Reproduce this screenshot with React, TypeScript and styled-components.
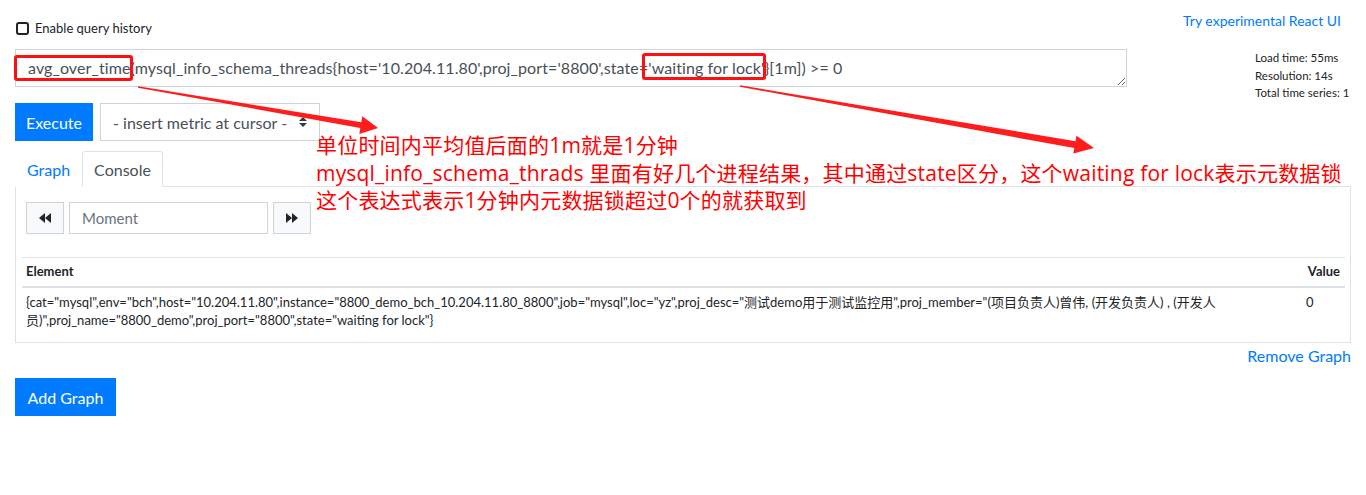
import React from 'react';
import styled, { createGlobalStyle } from 'styled-components';

const GlobalStyle = createGlobalStyle`
  html, body {
    margin: 0;
    padding: 0;
    background: #fff;
  }
  body {
    font-family: Lato, "Noto Sans CJK SC", sans-serif;
    color: #212529;
    font-size: 16px;
  }
`;

const Page = styled.div`
  position: relative;
  width: 1366px;
  height: 495px;
  padding: 0 15px;
  box-sizing: border-box;
  overflow: hidden;
`;

const TopBar = styled.div`
  display: flex;
  justify-content: space-between;
  align-items: flex-start;
  height: 49px;
`;

const HistoryToggle = styled.label`
  display: flex;
  align-items: center;
  gap: 6px;
  margin-top: 19px;
  margin-left: 1px;
  font-size: 13px;
  line-height: 18px;
  color: #212529;
`;

const CheckBox = styled.span`
  width: 9px;
  height: 9px;
  border: 2px solid #222;
  border-radius: 3px;
  display: inline-block;
`;

const ReactLink = styled.a`
  margin-top: 12px;
  margin-right: 10px;
  font-size: 14px;
  line-height: 18px;
  color: #007bff;
  text-decoration: none;
`;

const QueryRow = styled.div`
  display: flex;
  align-items: flex-start;
  height: 38px;
`;

const QueryInput = styled.textarea`
  display: block;
  width: 1112px;
  height: 38px;
  margin: 0;
  box-sizing: border-box;
  padding: 7px 12px;
  border: 1px solid #ced4da;
  font-family: Lato, "Noto Sans CJK SC", sans-serif;
  font-size: 16px;
  letter-spacing: 0.1px;
  line-height: 22px;
  color: #495057;
  resize: vertical;
  overflow: hidden;
  white-space: nowrap;
  outline: none;
`;

const Stats = styled.div`
  margin-left: auto;
  width: 96px;
  font-size: 11.5px;
  line-height: 17.5px;
  color: #212529;
`;

const Controls = styled.div`
  display: flex;
  gap: 7px;
  margin-top: 16px;
`;

const PrimaryButton = styled.button<{ $width: number }>`
  display: block;
  width: ${({ $width }) => $width}px;
  height: 38px;
  border: 1px solid #007bff;
  background: #007bff;
  color: #fff;
  font-family: Lato, sans-serif;
  font-size: 16px;
  padding: 0;
  border-radius: 0;
`;

const MetricSelect = styled.div`
  width: 220px;
  height: 38px;
  box-sizing: border-box;
  border: 1px solid #ced4da;
  display: flex;
  align-items: center;
  padding: 0 12px;
  font-size: 16px;
  color: #495057;
`;

const Caret = styled.svg`
  margin-left: auto;
`;

const Tabs = styled.div`
  display: flex;
  margin-top: 10px;
  border-bottom: 1px solid #dee2e6;
`;

const Tab = styled.div<{ $active?: boolean }>`
  height: 34px;
  padding: 0 11px;
  display: flex;
  align-items: center;
  font-size: 16px;
  color: ${({ $active }) => ($active ? '#495057' : '#007bff')};
  border: 1px solid ${({ $active }) => ($active ? '#dee2e6' : 'transparent')};
  border-bottom-color: ${({ $active }) => ($active ? '#fff' : 'transparent')};
  border-radius: 3px 3px 0 0;
  margin-bottom: -1px;
  background: #fff;
`;

const Panel = styled.div`
  border: 1px solid #dee2e6;
  border-top: 0;
  padding: 15px 5px 8px 6px;
`;

const MomentRow = styled.div`
  display: flex;
  gap: 5px;
  margin-left: 4px;
`;

const StepButton = styled.button`
  width: 38px;
  height: 32px;
  border: 1px solid #ced4da;
  background: #f8f9fa;
  display: flex;
  align-items: center;
  justify-content: center;
  padding: 0;
  border-radius: 0;
`;

const MomentInput = styled.div`
  width: 199px;
  height: 32px;
  box-sizing: border-box;
  border: 1px solid #ced4da;
  display: flex;
  align-items: center;
  padding: 0 12px;
  font-size: 15px;
  color: #6c757d;
`;

const ResultTable = styled.table`
  width: 100%;
  margin-top: 23px;
  border-collapse: collapse;
  font-size: 13px;
  color: #212529;
`;

const HeadCell = styled.th<{ $right?: boolean }>`
  text-align: ${({ $right }) => ($right ? 'right' : 'left')};
  font-weight: 700;
  padding: 5px 5px 6px 4px;
  line-height: 17px;
  border-top: 1px solid #dee2e6;
  border-bottom: 2px solid #dee2e6;
`;

const Cell = styled.td<{ $narrow?: boolean }>`
  vertical-align: top;
  padding: 5px ${({ $narrow }) => ($narrow ? '5px' : '60px')} 5px 4px;
  line-height: 18px;
  width: ${({ $narrow }) => ($narrow ? '34px' : 'auto')};
`;

const RemoveLink = styled.div`
  text-align: right;
  margin-top: 1px;
  line-height: 24px;
  font-size: 16px;
  color: #007bff;
`;

const AddRow = styled.div`
  margin-top: 10px;
`;

/* annotation layer drawn over the screenshot */
const Mark = styled.div<{ $x: number; $y: number; $w: number; $h: number }>`
  position: absolute;
  left: ${({ $x }) => $x}px;
  top: ${({ $y }) => $y}px;
  width: ${({ $w }) => $w}px;
  height: ${({ $h }) => $h}px;
  box-sizing: border-box;
  border: 3px solid #ff1010;
  border-radius: 3px;
`;

const Arrows = styled.svg`
  position: absolute;
  left: 0;
  top: 0;
  pointer-events: none;
`;

const Note = styled.div`
  position: absolute;
  left: 316px;
  top: 132px;
  font-family: "Open Sans", "Noto Sans CJK SC", sans-serif;
  font-size: 21px;
  letter-spacing: 0.2px;
  line-height: 27.5px;
  color: #ff0000;
  white-space: nowrap;
`;

const Rewind = ({ flip }: { flip?: boolean }) => (
  <svg width="12" height="10" viewBox="0 0 12 10" style={flip ? { transform: 'scaleX(-1)' } : undefined}>
    <polygon points="6,0 0,5 6,10" fill="#212529" />
    <polygon points="12,0 6,5 12,10" fill="#212529" />
  </svg>
);

const query =
  "avg_over_time(mysql_info_schema_threads{host='10.204.11.80',proj_port='8800',state='waiting for lock'}[1m]) >= 0";

const series =
  '{cat="mysql",env="bch",host="10.204.11.80",instance="8800_demo_bch_10.204.11.80_8800",job="mysql",loc="yz",proj_desc="测试demo用于测试监控用",proj_member="(项目负责人)曾伟, (开发负责人) , (开发人员)",proj_name="8800_demo",proj_port="8800",state="waiting for lock"}';

export default function App() {
  return (
    <>
      <GlobalStyle />
      <Page>
        <TopBar>
          <HistoryToggle>
            <CheckBox />
            Enable query history
          </HistoryToggle>
          <ReactLink href="#">Try experimental React UI</ReactLink>
        </TopBar>

        <QueryRow>
          <QueryInput readOnly value={query} />
          <Stats>
            <div>Load time: 55ms</div>
            <div>Resolution: 14s</div>
            <div>Total time series: 1</div>
          </Stats>
        </QueryRow>

        <Controls>
          <PrimaryButton $width={78}>Execute</PrimaryButton>
          <MetricSelect>
            - insert metric at cursor -
            <Caret width="8" height="10" viewBox="0 0 8 10">
              <polygon points="0,4 4,0 8,4" fill="#343a40" />
              <polygon points="0,6 8,6 4,10" fill="#343a40" />
            </Caret>
          </MetricSelect>
        </Controls>

        <Tabs>
          <Tab>Graph</Tab>
          <Tab $active>Console</Tab>
        </Tabs>

        <Panel>
          <MomentRow>
            <StepButton>
              <Rewind />
            </StepButton>
            <MomentInput>Moment</MomentInput>
            <StepButton>
              <Rewind flip />
            </StepButton>
          </MomentRow>
          <ResultTable>
            <thead>
              <tr>
                <HeadCell>Element</HeadCell>
                <HeadCell $right>Value</HeadCell>
              </tr>
            </thead>
            <tbody>
              <tr>
                <Cell>{series}</Cell>
                <Cell $narrow>0</Cell>
              </tr>
            </tbody>
          </ResultTable>
        </Panel>

        <RemoveLink>Remove Graph</RemoveLink>
        <AddRow>
          <PrimaryButton $width={101}>Add Graph</PrimaryButton>
        </AddRow>

        <Mark $x={14} $y={55} $w={119} $h={26} />
        <Mark $x={642} $y={53} $w={124} $h={27} />
        <Arrows width="1366" height="495" viewBox="0 0 1366 495">
          <polygon
            points="138.1,86.3 361.3,122.3 362.3,116.2 378,128 359.3,134 360.3,127.9 137.9,87.7"
            fill="#ff1c1c"
          />
          <polygon
            points="740.1,85.3 1075.5,141.2 1076.5,135.8 1094,148 1073.3,153.5 1074.3,148.1 739.9,86.7"
            fill="#ff1c1c"
          />
        </Arrows>
        <Note>
          <div>单位时间内平均值后面的1m就是1分钟</div>
          <div>mysql_info_schema_thrads 里面有好几个进程结果，其中通过state区分，这个waiting for lock表示元数据锁</div>
          <div>这个表达式表示1分钟内元数据锁超过0个的就获取到</div>
        </Note>
      </Page>
    </>
  );
}
